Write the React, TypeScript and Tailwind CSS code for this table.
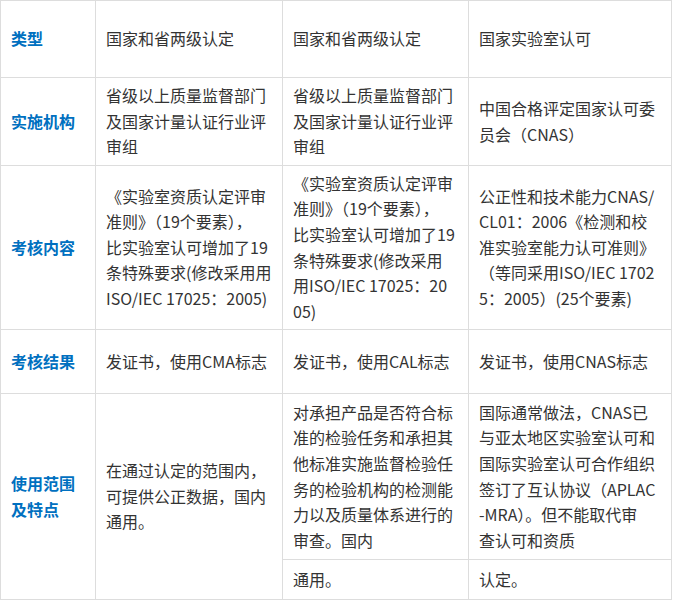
const th = "border border-[#dddddd] px-[10px] text-left align-middle font-bold text-[#0070c0]";
const td = "border border-[#dddddd] px-[10px] text-left align-middle text-[#333333]";

function Lines({ items }: { items: string[] }) {
  return (
    <>
      {items.map((t, i) => (
        <div key={i} className="whitespace-nowrap">
          {t}
        </div>
      ))}
    </>
  );
}

export default function App() {
  return (
    <div
      className="bg-white w-[674px] h-[604px] text-[16px] leading-[1.6]"
      style={{ fontFamily: '"Microsoft YaHei", "Noto Sans CJK SC", "Noto Sans", sans-serif' }}
    >
      <table className="table-fixed border-collapse w-[671px]">
        <colgroup>
          <col className="w-[95px]" />
          <col className="w-[187px]" />
          <col className="w-[186px]" />
          <col className="w-[203px]" />
        </colgroup>
        <tbody>
          <tr className="h-[77px]">
            <td className={th}>类型</td>
            <td className={td}>国家和省两级认定</td>
            <td className={td}>国家和省两级认定</td>
            <td className={td}>国家实验室认可</td>
          </tr>
          <tr className="h-[88px]">
            <td className={th}>实施机构</td>
            <td className={td}>
              <Lines items={["省级以上质量监督部门", "及国家计量认证行业评", "审组"]} />
            </td>
            <td className={td}>
              <Lines items={["省级以上质量监督部门", "及国家计量认证行业评", "审组"]} />
            </td>
            <td className={td}>
              <Lines items={["中国合格评定国家认可委", "员会（CNAS）"]} />
            </td>
          </tr>
          <tr className="h-[164px]">
            <td className={th}>考核内容</td>
            <td className={td}>
              <Lines
                items={[
                  "《实验室资质认定评审",
                  "准则》（19个要素），",
                  "比实验室认可增加了19",
                  "条特殊要求(修改采用用",
                  "ISO/IEC 17025：2005)",
                ]}
              />
            </td>
            <td className={td}>
              <Lines
                items={[
                  "《实验室资质认定评审",
                  "准则》（19个要素），",
                  "比实验室认可增加了19",
                  "条特殊要求(修改采用",
                  "用ISO/IEC 17025：20",
                  "05)",
                ]}
              />
            </td>
            <td className={td}>
              <Lines
                items={[
                  "公正性和技术能力CNAS/",
                  "CL01：2006《检测和校",
                  "准实验室能力认可准则》",
                  "（等同采用ISO/IEC 1702",
                  "5：2005）(25个要素)",
                ]}
              />
            </td>
          </tr>
          <tr className="h-[64px]">
            <td className={th}>考核结果</td>
            <td className={td}>发证书，使用CMA标志</td>
            <td className={td}>发证书，使用CAL标志</td>
            <td className={td}>发证书，使用CNAS标志</td>
          </tr>
          <tr className="h-[166px]">
            <td className={th} rowSpan={2}>
              <Lines items={["使用范围", "及特点"]} />
            </td>
            <td className={td} rowSpan={2}>
              <Lines items={["在通过认定的范围内，", "可提供公正数据，国内", "通用。"]} />
            </td>
            <td className={td}>
              <Lines
                items={[
                  "对承担产品是否符合标",
                  "准的检验任务和承担其",
                  "他标准实施监督检验任",
                  "务的检验机构的检测能",
                  "力以及质量体系进行的",
                  "审查。国内",
                ]}
              />
            </td>
            <td className={td}>
              <Lines
                items={[
                  "国际通常做法，CNAS已",
                  "与亚太地区实验室认可和",
                  "国际实验室认可合作组织",
                  "签订了互认协议（APLAC",
                  "-MRA）。但不能取代审",
                  "查认可和资质",
                ]}
              />
            </td>
          </tr>
          <tr className="h-[40px]">
            <td className={td}>通用。</td>
            <td className={td}>认定。</td>
          </tr>
        </tbody>
      </table>
    </div>
  );
}
